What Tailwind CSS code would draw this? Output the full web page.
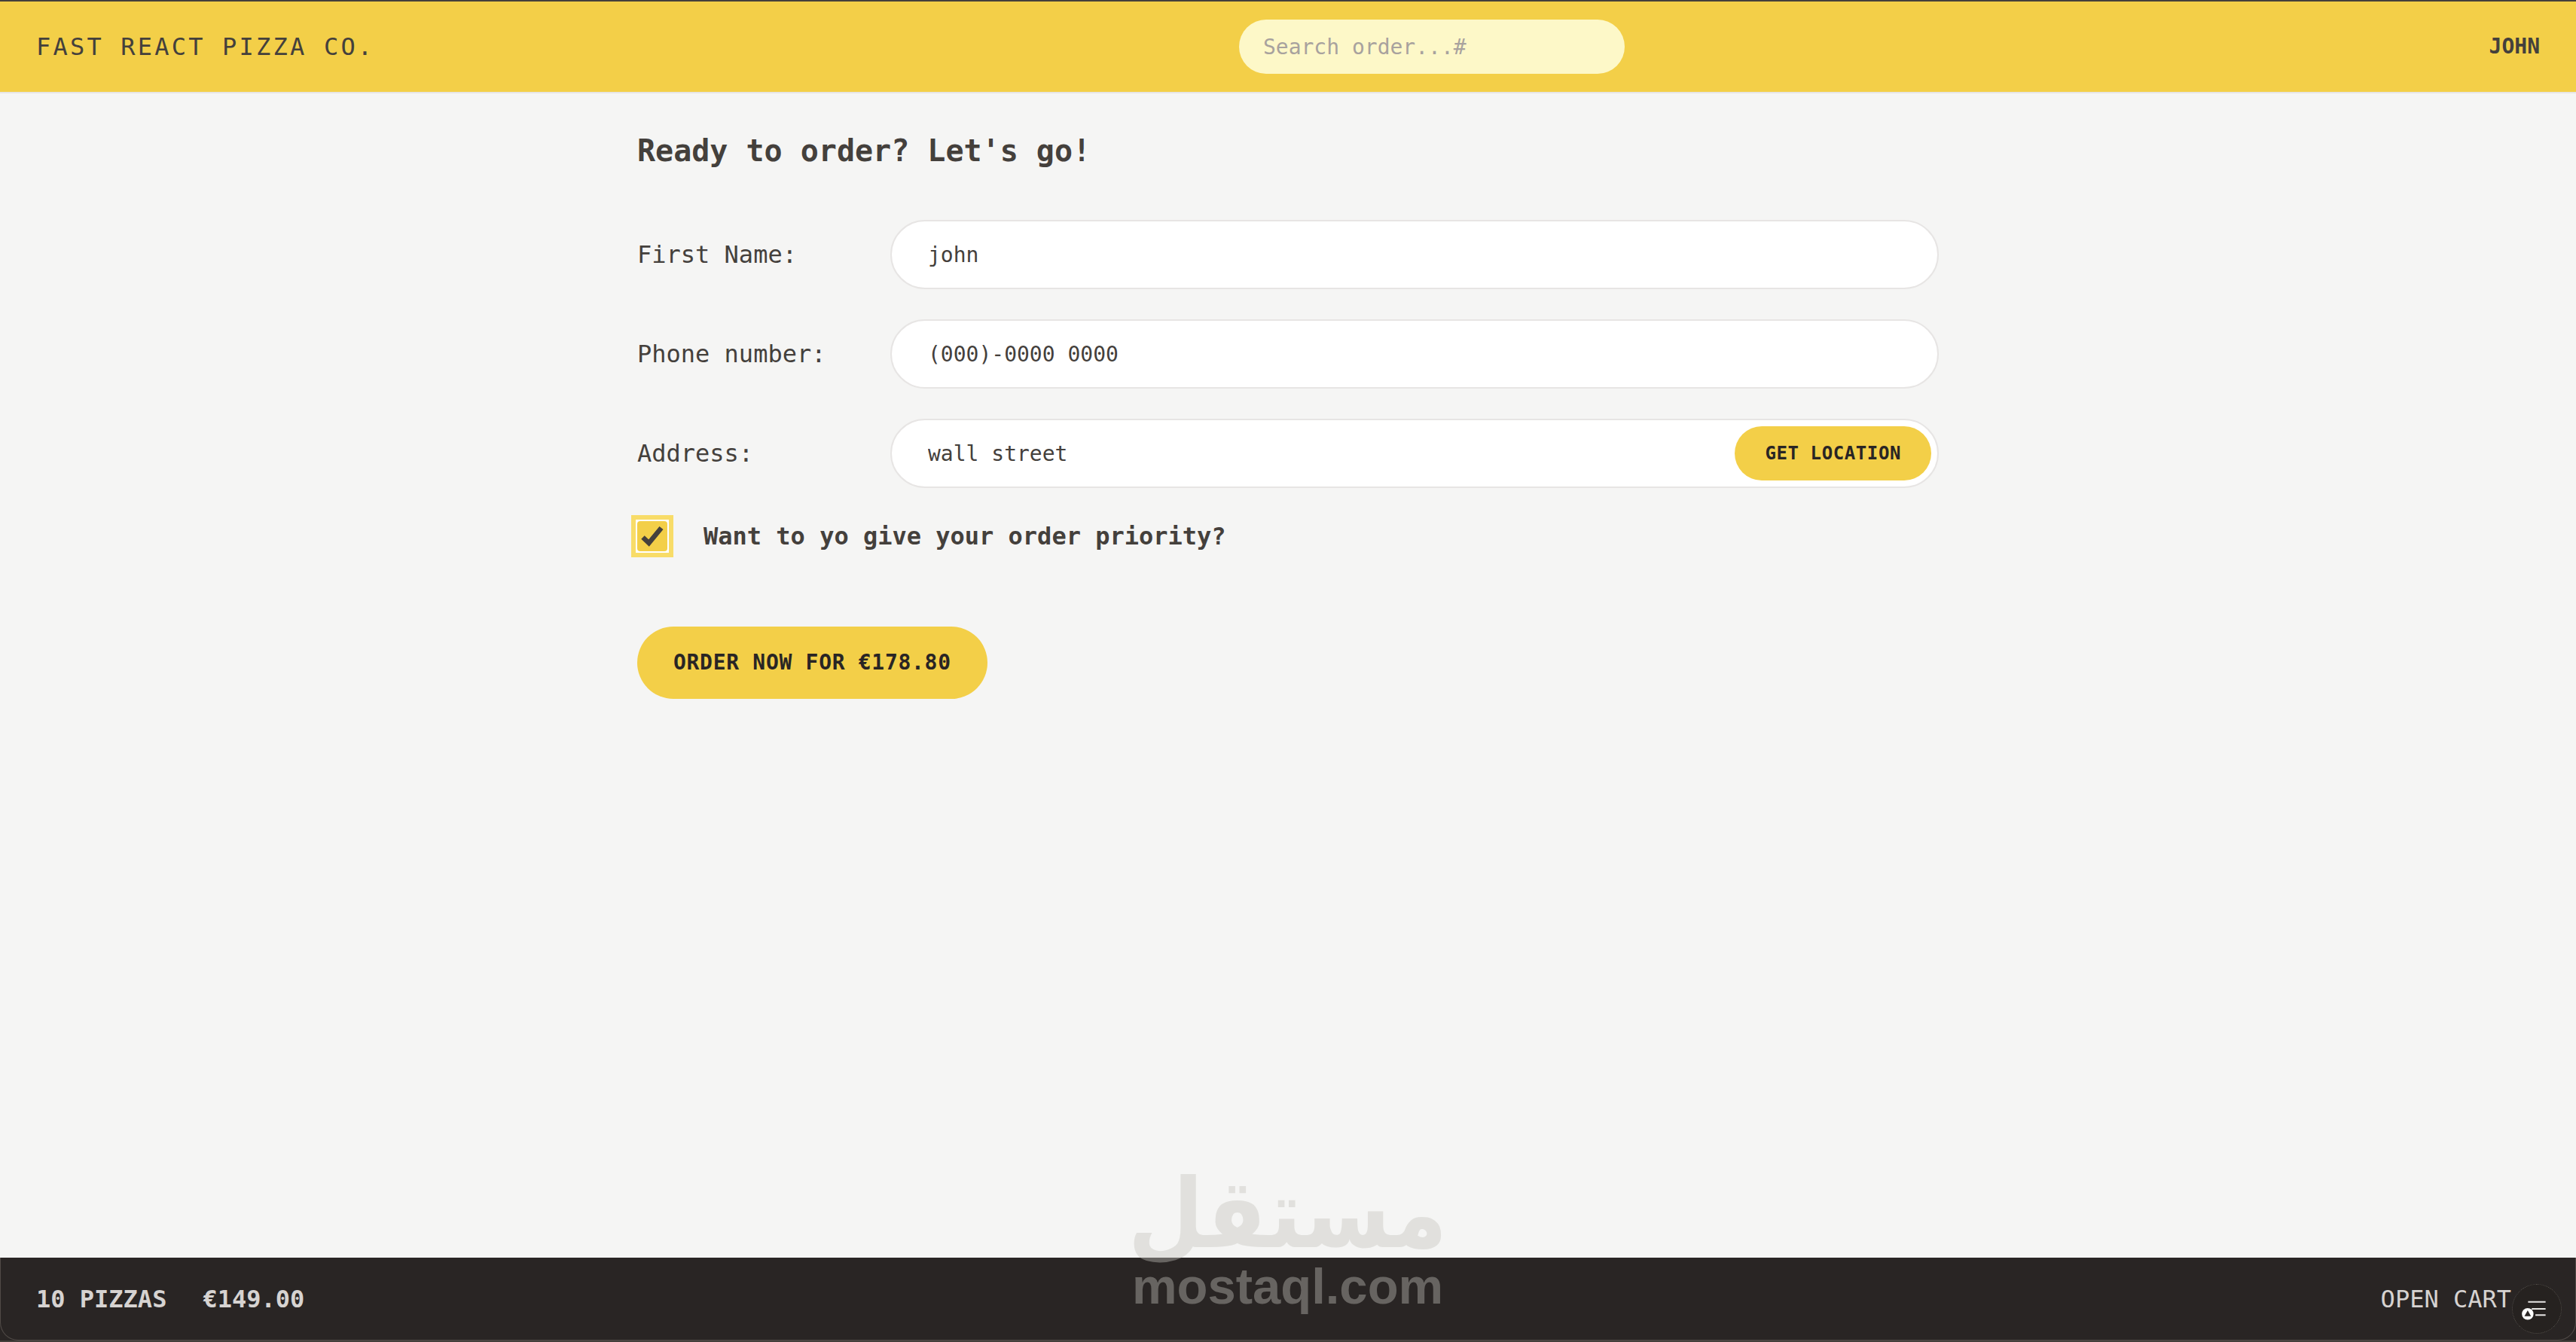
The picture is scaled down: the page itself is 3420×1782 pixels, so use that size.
<!DOCTYPE html>
<html lang="en">
<head>
<meta charset="utf-8">
<title>Fast React Pizza Co.</title>
<script src="https://cdn.jsdelivr.net/npm/@tailwindcss/browser@4"></script>
</head>
<body class="relative h-[1782px] overflow-hidden bg-[#f5f5f4] text-[#44403c] [font-family:'DejaVu_Sans_Mono',monospace]">
  <div class="grid h-full grid-rows-[124px_1fr_110px_2px]">
    <header class="flex items-center justify-between border-t-2 border-b-2 border-t-[#44403c] border-b-[#e7e5e4] bg-[#f3cf48] px-12">
      <a class="text-[32px] uppercase tracking-[3.2px]">Fast React Pizza Co.</a>
      <input class="h-[72px] w-[512px] rounded-full bg-[#fdf8c8] px-8 text-[28px] outline-none placeholder:text-[#a8a29e]" placeholder="Search order...#">
      <div class="text-[28px] font-semibold uppercase">John</div>
    </header>

    <main class="mx-auto w-[1728px] pt-12">
      <h2 class="mb-16 text-[40px] leading-[56px] font-bold">Ready to order? Let's go!</h2>
      <form>
        <div class="mb-10 flex items-center">
          <label class="w-[336px] shrink-0 text-[32px]">First Name:</label>
          <input class="h-[92px] grow rounded-full border-2 border-[#e7e5e4] bg-white px-12 text-[28px] outline-none" value="john">
        </div>
        <div class="mb-10 flex items-center">
          <label class="w-[336px] shrink-0 text-[32px]">Phone number:</label>
          <input class="h-[92px] grow rounded-full border-2 border-[#e7e5e4] bg-white px-12 text-[28px] outline-none" value="(000)-0000 0000">
        </div>
        <div class="mb-10 flex items-center">
          <label class="w-[336px] shrink-0 text-[32px]">Address:</label>
          <div class="relative grow">
            <input class="block h-[92px] w-full rounded-full border-2 border-[#e7e5e4] bg-white px-12 text-[28px] outline-none" value="wall street">
            <button type="button" class="absolute top-[10px] right-[10px] h-[72px] rounded-full bg-[#f3cf48] px-10 text-[24px] font-bold uppercase tracking-[0.6px] text-[#292524]">Get location</button>
          </div>
        </div>
        <div class="mb-24 -ml-2 flex h-12 items-center gap-10">
          <span class="size-14 shrink-0 bg-[#f8dc68] p-[6px]">
            <span class="block size-11 bg-white p-[2px]">
              <span class="block size-10 rounded-[4px] bg-[#f3cf48]">
                <svg class="size-10" viewBox="0 0 40 40" fill="none" stroke="#44403c" stroke-width="6.500"><path d="M7.500 21.500 15.500 29 32 9"/></svg>
              </span>
            </span>
          </span>
          <label class="text-[32px] font-bold">Want to yo give your order priority?</label>
        </div>
        <button type="button" class="h-24 rounded-full bg-[#f3cf48] px-12 text-[28px] font-bold uppercase tracking-[0.7px] text-[#292524]">Order now for €178.80</button>
      </form>
    </main>

    <footer class="relative flex items-center justify-between bg-[#292524] pr-[86px] pl-12 text-[32px] uppercase text-[#d6d3d1]">
      <p class="flex gap-12 font-bold"><span>10 pizzas</span><span>€149.00</span></p>
      <a>Open cart</a>
      <div class="pointer-events-none absolute inset-0 rounded-b-[24px] border-x border-b border-[#6b6560]/60"></div>
    </footer>
    <div class="bg-[#44403c]"></div>
  </div>

  <!-- floating round button over the footer -->
  <div class="absolute top-[1705px] left-[3335px] size-[66px] rounded-full border border-dotted border-[#57534e] bg-[#262220]">
    <svg class="absolute inset-0 size-full" viewBox="0 0 66 66" fill="none">
      <path d="M21 23.500H45M26 33H45M31 41.500H45" stroke="#e7e5e4" stroke-width="2"/>
      <circle cx="20.500" cy="40" r="8" fill="#fff"/>
      <path d="M20.500 35 25 43H16Z" fill="#292524"/>
    </svg>
  </div>

  <!-- mostaql watermark -->
  <div class="pointer-events-none absolute top-[1550px] left-[1505px] flex w-[409px] flex-col items-center text-[#c4c3bc] opacity-40 [font-family:'Liberation_Sans',sans-serif]">
    <div dir="rtl" lang="ar" class="h-[120px] scale-y-110 text-[116px] leading-[124px] font-bold [font-family:'DejaVu_Sans',sans-serif]">مستقل</div>
    <div class="text-[67px] leading-[76px] font-bold">mostaql.com</div>
  </div>
</body>
</html>
